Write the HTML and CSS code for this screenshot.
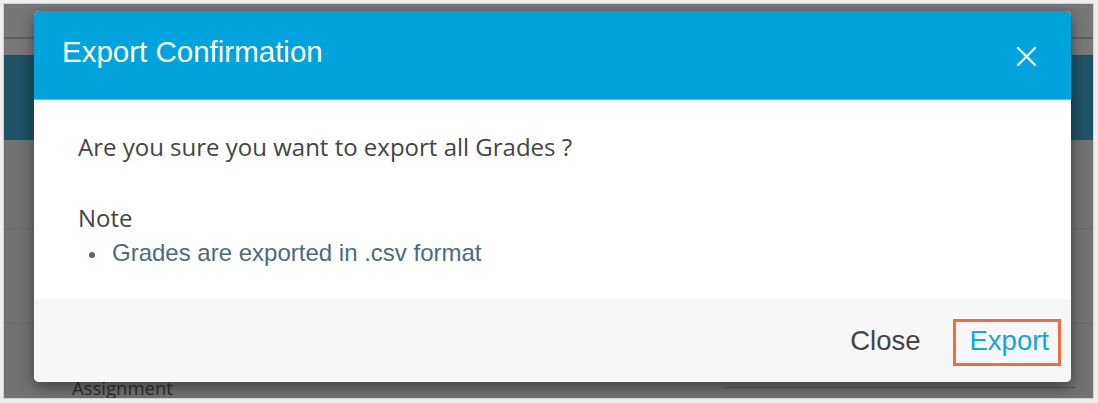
FILE: index.html
```html
<!DOCTYPE html>
<html lang="en">
<head>
  <meta charset="UTF-8" />
  <title>Export Confirmation</title>
  <link rel="stylesheet" href="styles.css">
</head>
<body>
  <div class="app">
    <div class="topbar"></div>
    <div class="subbar"></div>
    <div class="banner"></div>
    <div class="row"></div>
    <div class="row row-mid"></div>
    <div class="row-last">
      <span class="field-label">Assignment</span>
      <span class="field-line"></span>
    </div>

    <!-- Export dialog -->
    <div class="overlay">
      <div class="modal">
        <div class="modal-header">
          <h2 class="modal-title">Export Confirmation</h2>
          <button class="close-x" aria-label="Close">
            <svg width="21" height="21" viewBox="0 0 21 21">
              <path d="M2 2 L19 19 M19 2 L2 19" stroke="#fff" stroke-width="2.3" stroke-linecap="round" fill="none"/>
            </svg>
          </button>
        </div>
        <div class="modal-body">
          <p class="question">Are you sure you want to export all Grades ?</p>
          <p class="note">Note</p>
          <ul class="note-list">
            <li>Grades are exported in .csv format</li>
          </ul>
        </div>
        <div class="modal-footer">
          <button class="btn-close">Close</button>
          <button class="btn-export">Export</button>
        </div>
      </div>
    </div>
  </div>
</body>
</html>
```

FILE: styles.css
```css
body {
  margin: 0;
  padding: 4px 5px 5px 4px;
  background-color: #eeeeee;
}
.app {
  position: relative;
  height: 394px;
  background-color: #727272;
  overflow: hidden;
  box-shadow: 0 0 0 1px #d2d2d2;
}
.topbar {
  height: 33px;
  background-color: #777777;
  border-bottom: 2px solid #5f5f5f;
}
.subbar {
  height: 16px;
  background-color: #787878;
}
.banner {
  height: 85px;
  background-color: #1d5365;
}
.row {
  height: 88px;
  border-bottom: 1px solid #686868;
}
.row-mid {
  height: 94px;
}
.row-last {
  display: flex;
  align-items: flex-start;
  padding: 51px 0 0 68px;
}
.field-label {
  font-family: "Open Sans", sans-serif;
  font-size: 18.5px;
  line-height: 25px;
  color: #2e2e2e;
}
.field-line {
  margin: 12px 18px 0 auto;
  width: 349px;
  border-bottom: 1px dotted #3a3a3a;
}
/* dialog layer sits over the page */
.overlay {
  position: absolute;
  top: 0; left: 0; right: 0; bottom: 0;
}
.modal {
  margin: 7px 0 0 30px;
  width: 1037px;
  height: 371px;
  border-radius: 5px;
  overflow: hidden;
  background: #fff;
  box-shadow: 0 5px 15px rgba(0,0,0,0.45);
}
.modal-header {
  height: 88px;
  display: flex;
  justify-content: space-between;
  align-items: flex-start;
  padding: 0 34px 0 28px;
  background-color: #01a3dc;
  border-bottom: 1px solid #53c2ea;
}
.modal-title {
  margin: 24px 0 0;
  font-family: "Liberation Sans", Arial, sans-serif;
  font-weight: normal;
  font-size: 29.5px;
  line-height: 34px;
  color: #fff;
}
.close-x {
  margin-top: 35px;
  padding: 0;
  border: 0;
  background: none;
  width: 21px;
  height: 21px;
  cursor: pointer;
}
.close-x svg {
  display: block;
}
.modal-body {
  height: 199px;
  box-sizing: border-box;
  padding: 29px 44px 0;
  font-family: "Open Sans", sans-serif;
  font-size: 24px;
  line-height: 36px;
  color: #454545;
}
.question {
  margin: 0 0 35px;
}
.note {
  margin: 0;
}
.note-list {
  list-style: none;
  margin: 0;
  padding: 0;
}
.note-list li {
  position: relative;
  padding-left: 34px;
  font-family: "Liberation Sans", Arial, sans-serif;
  font-size: 24px;
  line-height: 34px;
  color: #4e6a7a;
}
.note-list li::before {
  content: "";
  position: absolute;
  left: 11px;
  top: 16px;
  width: 6px;
  height: 6px;
  border-radius: 50%;
  background-color: #4e6a7a;
}
.modal-footer {
  height: 83px;
  box-sizing: border-box;
  display: flex;
  justify-content: flex-end;
  align-items: center;
  padding: 4px 10px 0 0;
  background-color: #f7f7f7;
}
.btn-close,
.btn-export {
  font-family: "Liberation Sans", Arial, sans-serif;
  font-size: 27.5px;
  line-height: 31px;
  background: none;
  cursor: pointer;
}
.btn-close {
  border: 0;
  padding: 3px 0 7px;
  margin-right: 32px;
  color: #444;
}
.btn-export {
  border: 3px solid #ee6e40;
  padding: 3px 9px 7px 14px;
  color: #13a6df;
}
```
